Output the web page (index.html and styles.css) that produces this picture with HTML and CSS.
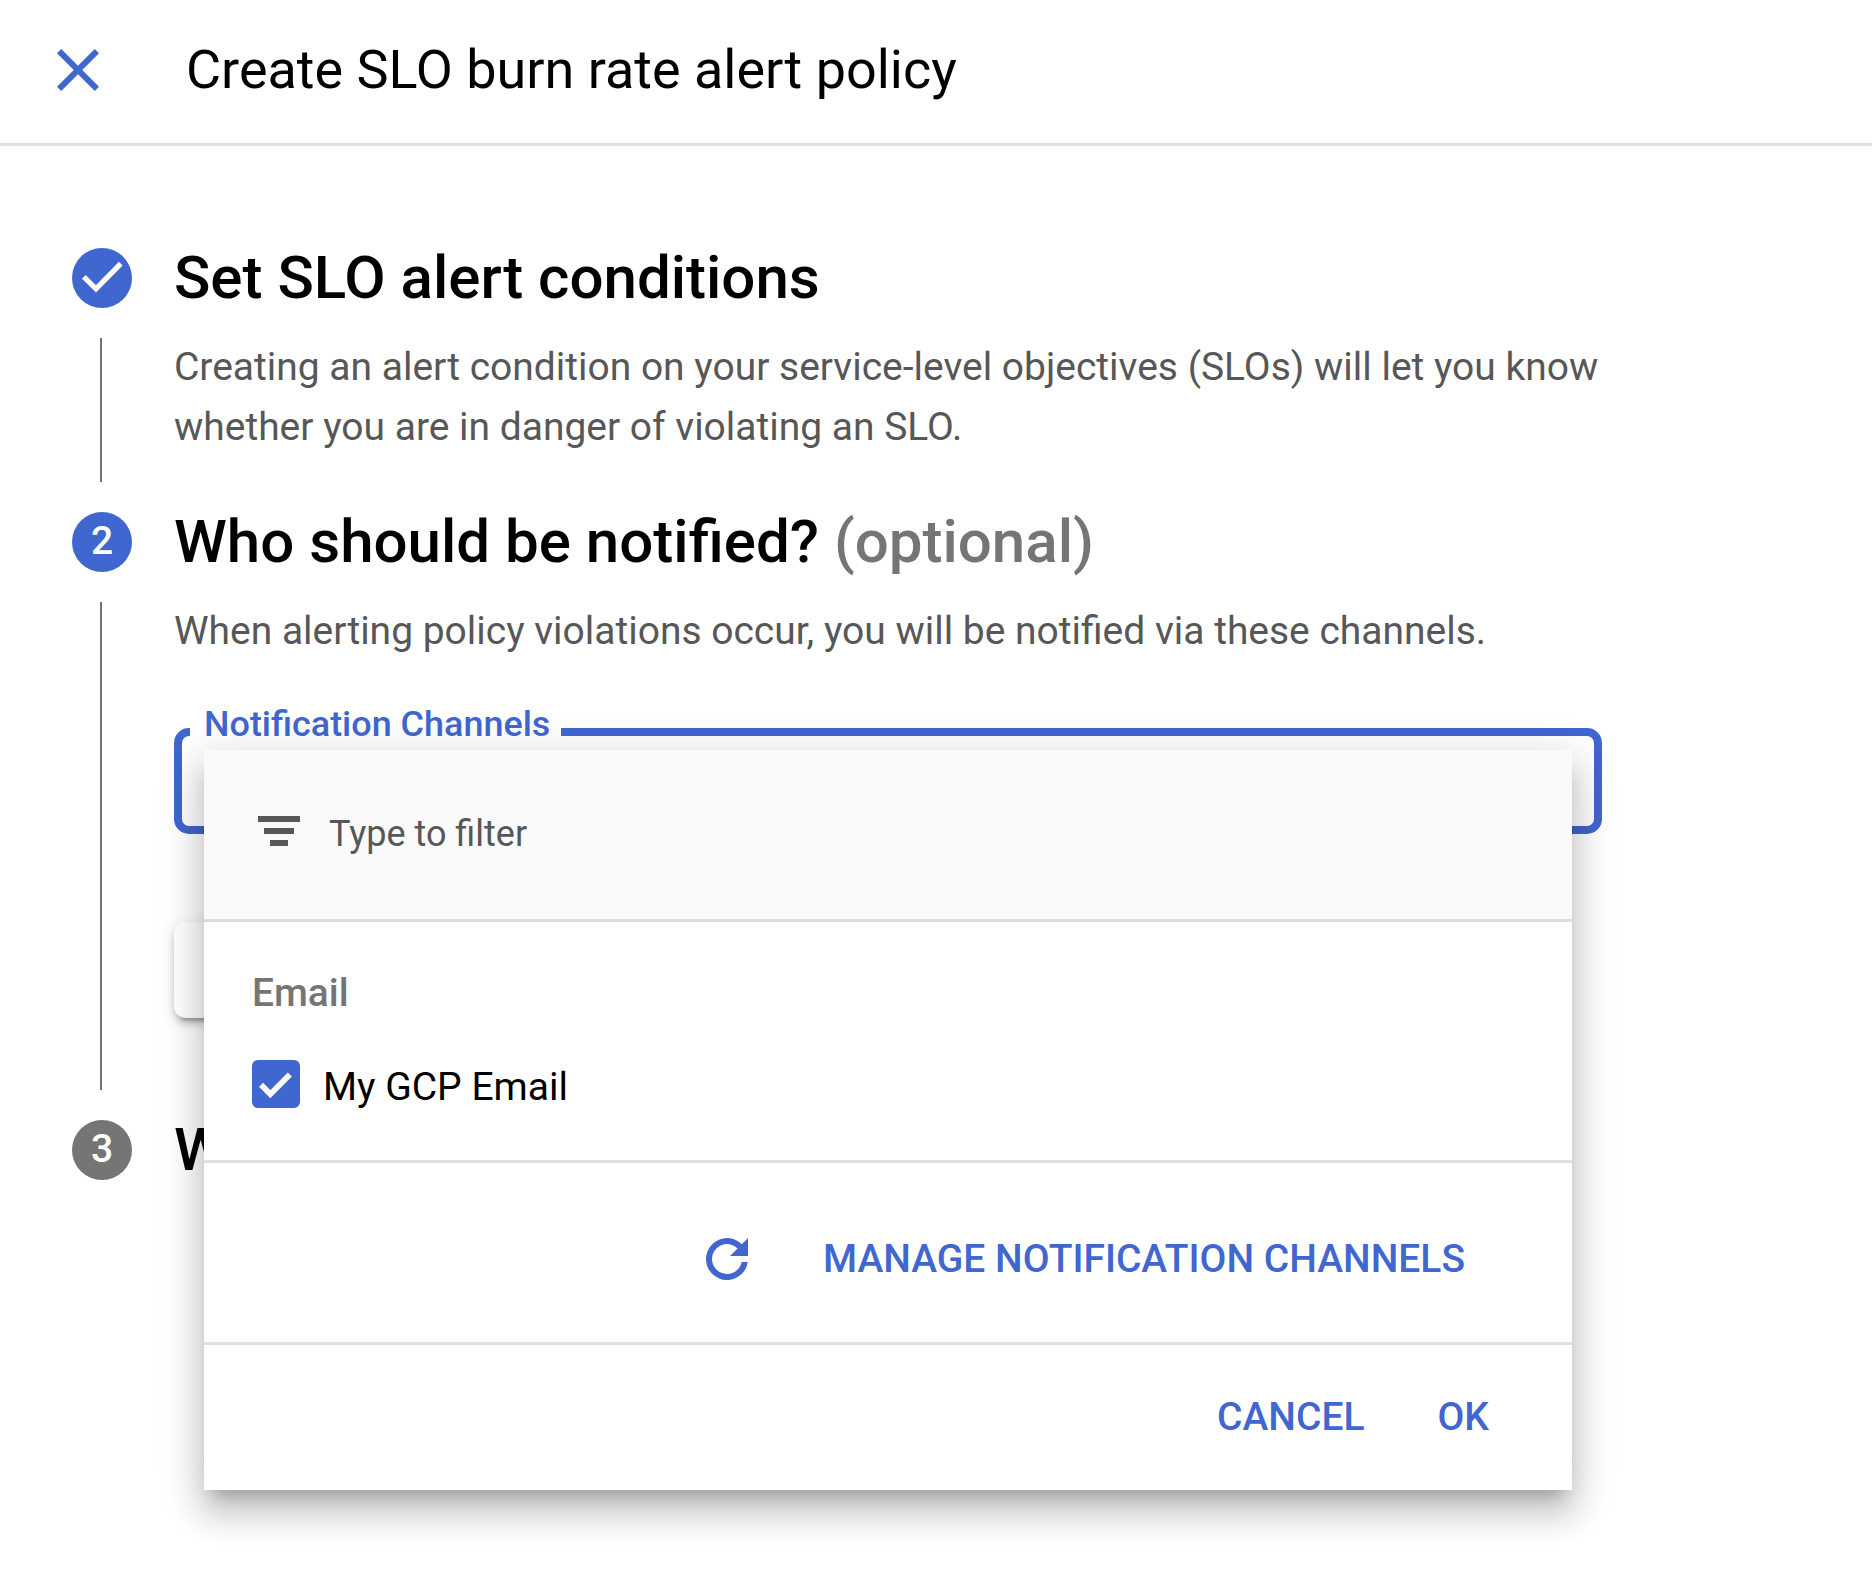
FILE: index.html
```html
<!DOCTYPE html>
<html lang="en">
<head>
<meta charset="utf-8">
<title>Create SLO burn rate alert policy</title>
<link rel="stylesheet" href="styles.css">
</head>
<body>
<header class="header">
  <svg class="close" viewBox="0 0 24 24"><path d="M19 6.41L17.59 5 12 10.59 6.41 5 5 6.41 10.59 12 5 17.59 6.41 19 12 13.41 17.59 19 19 17.59 13.41 12z"/></svg>
  <h1 class="title">Create SLO burn rate alert policy</h1>
</header>
<main class="stepper">
  <section class="step">
    <div class="rail">
      <span class="badge"><svg class="badge-check" viewBox="0 0 60 60"><path d="M11.8 28.8L24 40.8L48.8 15.6"/></svg></span>
      <span class="line"></span>
    </div>
    <div class="content">
      <h2 class="heading">Set SLO alert conditions</h2>
      <p class="text">Creating an alert condition on your service-level objectives (SLOs) will let you know<br>whether you are in danger of violating an SLO.</p>
    </div>
  </section>
  <section class="step step-notify">
    <div class="rail">
      <span class="badge">2</span>
      <span class="line"></span>
    </div>
    <div class="content">
      <h2 class="heading">Who should be notified? <span class="optional">(optional)</span></h2>
      <p class="text">When alerting policy violations occur, you will be notified via these channels.</p>
      <div class="field">
        <span class="label">Notification Channels</span>
        <div class="menu">
          <div class="filter">
            <svg class="filter-icon" viewBox="0 0 42 30"><path d="M0 0h42v6H0zM6 12h30v6H6zM12 24h18v6H12z"/></svg>
            <span class="placeholder">Type to filter</span>
          </div>
          <div class="options">
            <div class="group">Email</div>
            <div class="option">
              <span class="checkbox"><svg viewBox="0 0 48 48"><path d="M9.1 24.7L18.3 34.2L37.8 14.5"/></svg></span>
              <span class="option-name">My GCP Email</span>
            </div>
          </div>
          <div class="manage">
            <svg class="refresh" viewBox="0 0 42 42"><path d="M42 0V18H24L31.6 10.4A15 15 0 1 0 35.7 24H41.8A21 21 0 1 1 35.85 6.15Z"/></svg>
            <span class="action manage-label">MANAGE NOTIFICATION CHANNELS</span>
          </div>
          <div class="actions">
            <span class="action">CANCEL</span>
            <span class="action">OK</span>
          </div>
        </div>
      </div>
      <div class="next"></div>
    </div>
  </section>
  <section class="step">
    <div class="rail"><span class="badge badge-idle">3</span></div>
    <div class="content"><h2 class="heading">W</h2></div>
  </section>
</main>
</body>
</html>
```
FILE: styles.css
```css
* { box-sizing: border-box; }
body {
  margin: 0;
  width: 1872px;
  height: 1588px;
  overflow: hidden;
  background: #fff;
  color: #000;
  font-family: Roboto, "Liberation Sans", sans-serif;
}
h1, h2, p { margin: 0; }
svg { display: block; }

.header {
  display: flex;
  align-items: center;
  gap: 72px;
  height: 146px;
  padding: 0 0 4px 42px;
  border-bottom: 3px solid #e0e0e0;
}
.close { width: 72px; height: 72px; fill: #4066d0; }
.title { font-size: 53.95px; line-height: 72px; font-weight: 400; white-space: nowrap; }

.stepper { padding: 102px 0 0 72px; }
.step { display: flex; gap: 42px; height: 264px; }
.step-notify { height: 608px; }
.rail { display: flex; flex-direction: column; width: 60px; gap: 30px; padding-bottom: 30px; }
.badge {
  display: flex;
  flex: none;
  align-items: center;
  justify-content: center;
  width: 60px;
  height: 60px;
  border-radius: 50%;
  background: #4066d0;
  color: #fff;
  font-size: 39px;
  font-weight: 500;
  line-height: 56px;
  padding-bottom: 2px;
}
.badge-idle { background: #757575; }
.badge-check { flex: none; width: 60px; height: 60px; margin-bottom: -2px; fill: none; stroke: #fff; stroke-width: 5.2; }
.line { flex: 1; width: 2px; margin-left: 28px; background: #757575; }
.content { width: 1428px; white-space: nowrap; }
.heading { font-size: 60.06px; line-height: 60px; font-weight: 500; }
.optional { color: #757575; }
.text { margin-top: 29px; font-size: 38.97px; line-height: 60px; color: #575757; }

.field {
  position: relative;
  height: 106px;
  margin-top: 67px;
  border: 8px solid #4066d0;
  border-radius: 15px;
}
.label {
  position: absolute;
  left: 8px;
  top: -33px;
  width: 371px;
  padding-left: 14px;
  background: #fff;
  color: #4066d0;
  font-size: 35.95px;
  font-weight: 500;
  line-height: 42px;
}
.menu {
  position: absolute;
  z-index: 1;
  left: 22px;
  top: 14px;
  width: 1368px;
  height: 740px;
  background: #fff;
  box-shadow: 0 15px 15px -9px rgba(0,0,0,.2), 0 24px 30px 3px rgba(0,0,0,.14), 0 9px 42px 6px rgba(0,0,0,.12);
}
.filter {
  display: flex;
  align-items: center;
  gap: 29px;
  height: 172px;
  padding: 0 54px 7px;
  background: #fafafa;
  border-bottom: 3px solid #dcdcdc;
}
.filter-icon { width: 42px; height: 30px; fill: #575757; }
.placeholder { font-size: 36px; line-height: 42px; color: #575757; padding-top: 6px; }
.options { height: 241px; padding: 41px 48px 0 48px; border-bottom: 3px solid #e0e0e0; }
.group { color: #757575; font-size: 38.9px; line-height: 60px; font-weight: 500; }
.option { display: flex; align-items: center; gap: 23px; margin-top: 37px; height: 48px; }
.checkbox { width: 48px; height: 48px; border-radius: 6px; background: #4066d0; }
.checkbox svg { fill: none; stroke: #fafafa; stroke-width: 5.8; }
.option-name { font-size: 39px; line-height: 48px; padding-top: 6px; }
.manage {
  display: flex;
  align-items: center;
  justify-content: flex-end;
  gap: 75px;
  height: 182px;
  padding: 10px 107px 0 0;
  border-bottom: 3px solid #e0e0e0;
}
.refresh { width: 42px; height: 42px; fill: #4066d0; margin-top: 2px; }
.action { color: #4066d0; font-size: 38.97px; line-height: 48px; font-weight: 500; }
.manage-label { padding-top: 2px; }
.actions { display: flex; justify-content: flex-end; gap: 73px; padding: 48px 83px 0 0; }
.next {
  width: 420px;
  height: 96px;
  margin-top: 88px;
  border-radius: 12px;
  background: #fff;
  box-shadow: 0 9px 3px -6px rgba(0,0,0,.2), 0 6px 6px rgba(0,0,0,.14), 0 3px 15px rgba(0,0,0,.12);
}
```
